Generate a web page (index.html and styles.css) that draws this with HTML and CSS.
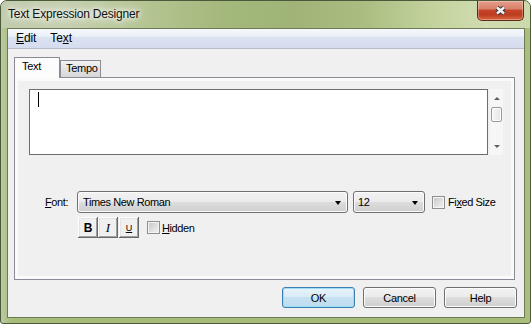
FILE: index.html
```html
<!DOCTYPE html>
<html lang="en">
<head>
  <meta charset="UTF-8" />
  <title>Text Expression Designer</title>
  <link rel="stylesheet" href="styles.css">
</head>
<body>

  <div class="window">
    <div class="titlebar">
      <span class="title">Text Expression Designer</span>
      <div class="close">
        <svg width="13" height="11" viewBox="0 0 13 11">
          <path d="M3 2.5 L10 8.5 M10 2.5 L3 8.5" stroke="#3d3d3d" stroke-width="4.6" fill="none"/>
          <path d="M3 2.5 L10 8.5 M10 2.5 L3 8.5" stroke="#f4f4f4" stroke-width="2.4" fill="none"/>
        </svg>
      </div>
    </div>

    <div class="frame">
      <div class="client">
        <div class="menubar">
          <span class="menu"><u>E</u>dit</span>
          <span class="menu">Te<u>x</u>t</span>
        </div>

        <div class="body">
          <div class="tabs">
            <div class="tab active">Text</div>
            <div class="tab">Tempo</div>
          </div>

          <div class="panel">
            <div class="editor-row">
              <div class="editor"><span class="caret"></span></div>
              <div class="scrollbar">
                <span class="arrow-up"></span>
                <span class="thumb"></span>
                <span class="arrow-down"></span>
              </div>
            </div>

            <div class="font-row">
              <span class="label"><u>F</u>ont:</span>
              <div class="combo font-combo"><span>Times New Roman</span><i class="drop"></i></div>
              <div class="combo size-combo"><span>12</span><i class="drop"></i></div>
              <label class="check fixed"><span class="box"></span>Fi<u>x</u>ed Size</label>
            </div>

            <div class="style-row">
              <div class="toolbtn bold">B</div>
              <div class="toolbtn italic">I</div>
              <div class="toolbtn under">U</div>
              <label class="check hidden"><span class="box"></span><u>H</u>idden</label>
            </div>
          </div>

          <div class="buttons">
            <button class="btn default">OK</button>
            <button class="btn">Cancel</button>
            <button class="btn">Help</button>
          </div>
        </div>
      </div>
    </div>
  </div>

</body>
</html>
```

FILE: styles.css
```css
* { box-sizing: border-box; }
body {
  margin: 0;
  background: #fff;
  font-family: "Liberation Sans", Arial, sans-serif;
  font-size: 11px;
  letter-spacing: -0.4px;
  color: #000;
}
u { text-decoration: underline; text-underline-offset: 1px; }

.window {
  width: 531px;
  height: 324px;
  border: 1px solid #4b5a3a;
  border-radius: 7px 7px 3px 3px;
  background: linear-gradient(90deg, #bccaa2, #a6bc78 2%, #a6bc78 97%, #a9bf7b);
  display: flex;
  flex-direction: column;
  overflow: hidden;
}
.titlebar {
  height: 27px;
  flex: none;
  display: flex;
  align-items: flex-start;
  background: linear-gradient(90deg, #c1cbad 0%, #c6d0b0 12%, #b4c491 28%, #a4b87c 42%, #9fb476 55%, #a9bd80 68%, #c4d39e 82%, #d0dcb1 92%, #ccd9ab 100%);
}
.title {
  font-size: 12px;
  line-height: 27px;
  padding-left: 7px;
  letter-spacing: -0.2px;
  color: #111;
  text-shadow: 0 0 4px #fff, 0 0 8px #fff, 0 0 12px rgba(255,255,255,0.9);
}
.close {
  margin-left: auto;
  margin-right: 6px;
  width: 47px;
  height: 20px;
  border: 1px solid #5f2a1e;
  border-top: none;
  border-radius: 0 0 5px 5px;
  background: linear-gradient(#e59d8a 0%, #d9826c 40%, #c6452a 50%, #bd3b1f 72%, #d9683f 100%);
  box-shadow: inset 0 0 0 1px rgba(255,255,255,0.3);
  display: flex;
  align-items: center;
  justify-content: center;
}

.frame {
  flex: 1;
  padding: 0 5px 5px 6px;
  display: flex;
}
.client {
  flex: 1;
  border: 1px solid #6b7b55;
  background: #f0f0f0;
  display: flex;
  flex-direction: column;
}
.menubar {
  height: 20px;
  flex: none;
  border-bottom: 1px solid #b6bcc8;
  background: linear-gradient(#f5f7fb 0%, #eef2f9 35%, #dbe3f2 45%, #d4dcee 100%);
  display: flex;
  padding-left: 1px;
  font-size: 12px;
  line-height: 19px;
  letter-spacing: -0.1px;
}
.menu { padding: 0 7px; }

.body {
  flex: 1;
  display: flex;
  flex-direction: column;
  padding: 8px 7px 9px 6px;
}
.tabs {
  height: 20px;
  flex: none;
  display: flex;
  align-items: flex-end;
}
.tab {
  height: 17px;
  width: 41px;
  border: 1px solid #898c95;
  border-bottom: none;
  padding: 1px 0 0 5px;
  line-height: 13px;
  letter-spacing: -0.3px;
  background: linear-gradient(#f2f2f2, #e3e3e3 50%, #d7d7d7);
}
.tab.active {
  width: 46px;
  height: 21px;
  margin-bottom: -1px;
  padding: 2px 0 0 7px;
  background: #fcfcfc;
  position: relative;
  z-index: 1;
}
.panel {
  flex: 1;
  margin-right: 2px;
  border: 1px solid #898c95;
  background: #f0f0f0;
  box-shadow: inset 0 0 0 3px #fafafa;
}

.editor-row {
  display: flex;
  height: 66px;
  margin: 11px 0 0 14px;
}
.editor {
  width: 459px;
  border: 1px solid #6d6d6d;
  background: #fff;
  padding: 2px 0 0 8px;
}
.caret {
  display: block;
  width: 1px;
  height: 15px;
  background: #000;
}
.scrollbar {
  width: 13px;
  margin-left: 2px;
  background: #f6f6f6;
  display: flex;
  flex-direction: column;
  align-items: center;
}
.arrow-up {
  margin-top: 8px;
  border-left: 3px solid transparent;
  border-right: 3px solid transparent;
  border-bottom: 3px solid #5e5e5e;
}
.thumb {
  margin-top: 7px;
  width: 11px;
  height: 15px;
  border: 1px solid #9a9a9a;
  border-radius: 2px;
  background: linear-gradient(90deg, #f6f6f6, #e6e6e6);
  box-shadow: inset 0 0 0 1px #fdfdfd;
}
.arrow-down {
  margin-top: auto;
  margin-bottom: 7px;
  border-left: 3px solid transparent;
  border-right: 3px solid transparent;
  border-top: 3px solid #5e5e5e;
}

.font-row {
  display: flex;
  align-items: center;
  height: 22px;
  margin: 36px 0 0 30px;
}
.label { width: 32px; }
.combo {
  height: 22px;
  border: 1px solid #707070;
  border-radius: 3px;
  background: linear-gradient(#f2f2f2, #ebebeb 50%, #dddddd 50%, #cfcfcf);
  box-shadow: inset 0 0 0 1px #fbfbfb;
  display: flex;
  align-items: center;
  padding: 0 6px 0 5px;
}
.combo span { flex: 1; }
.font-combo { width: 271px; }
.size-combo { width: 72px; margin-left: 5px; padding-left: 4px; }
.drop {
  border-left: 3px solid transparent;
  border-right: 3px solid transparent;
  border-top: 4px solid #000;
  margin-top: 1px;
}

.check {
  display: flex;
  align-items: center;
}
.box {
  width: 13px;
  height: 13px;
  margin-right: 3px;
  border: 1px solid #8f8f8f;
  background: linear-gradient(135deg, #c6c6c6, #f4f4f4);
  box-shadow: inset 0 0 0 1px #f4f4f4;
}
.fixed { margin-left: 7px; }

.style-row {
  display: flex;
  align-items: center;
  height: 21px;
  margin: 4px 0 0 63px;
}
.toolbtn {
  width: 20px;
  height: 21px;
  background: #f0f0f0;
  box-shadow: inset -1px -1px #696969, inset 1px 1px #fff, inset -2px -2px #a0a0a0, inset 2px 2px #e3e3e3;
  display: flex;
  align-items: center;
  justify-content: center;
  letter-spacing: 0;
}
.bold { font-weight: bold; font-size: 12px; }
.italic { font-family: "Liberation Serif", serif; font-style: italic; font-size: 13px; }
.under { margin-left: 1px; font-size: 9px; text-decoration: underline; }
.hidden { margin-left: 8px; }
.hidden .box { margin-right: 2px; }

.buttons {
  display: flex;
  justify-content: flex-end;
  gap: 8px;
  margin-top: 7px;
}
.btn {
  width: 73px;
  height: 21px;
  border: 1px solid #707070;
  border-radius: 3px;
  background: linear-gradient(#f2f2f2, #ebebeb 50%, #dddddd 50%, #cfcfcf);
  box-shadow: inset 0 0 0 1px #fcfcfc;
  font-family: "Liberation Sans", Arial, sans-serif;
  font-size: 11px;
  letter-spacing: -0.3px;
  color: #000;
  padding: 0;
}
.btn.default {
  border-color: #3c7fb1;
  background: linear-gradient(#e7f3fa, #d8ebf6 50%, #c6e2f2 50%, #bcdcef);
  box-shadow: inset 0 0 0 1px #9fdcf7;
}
```
